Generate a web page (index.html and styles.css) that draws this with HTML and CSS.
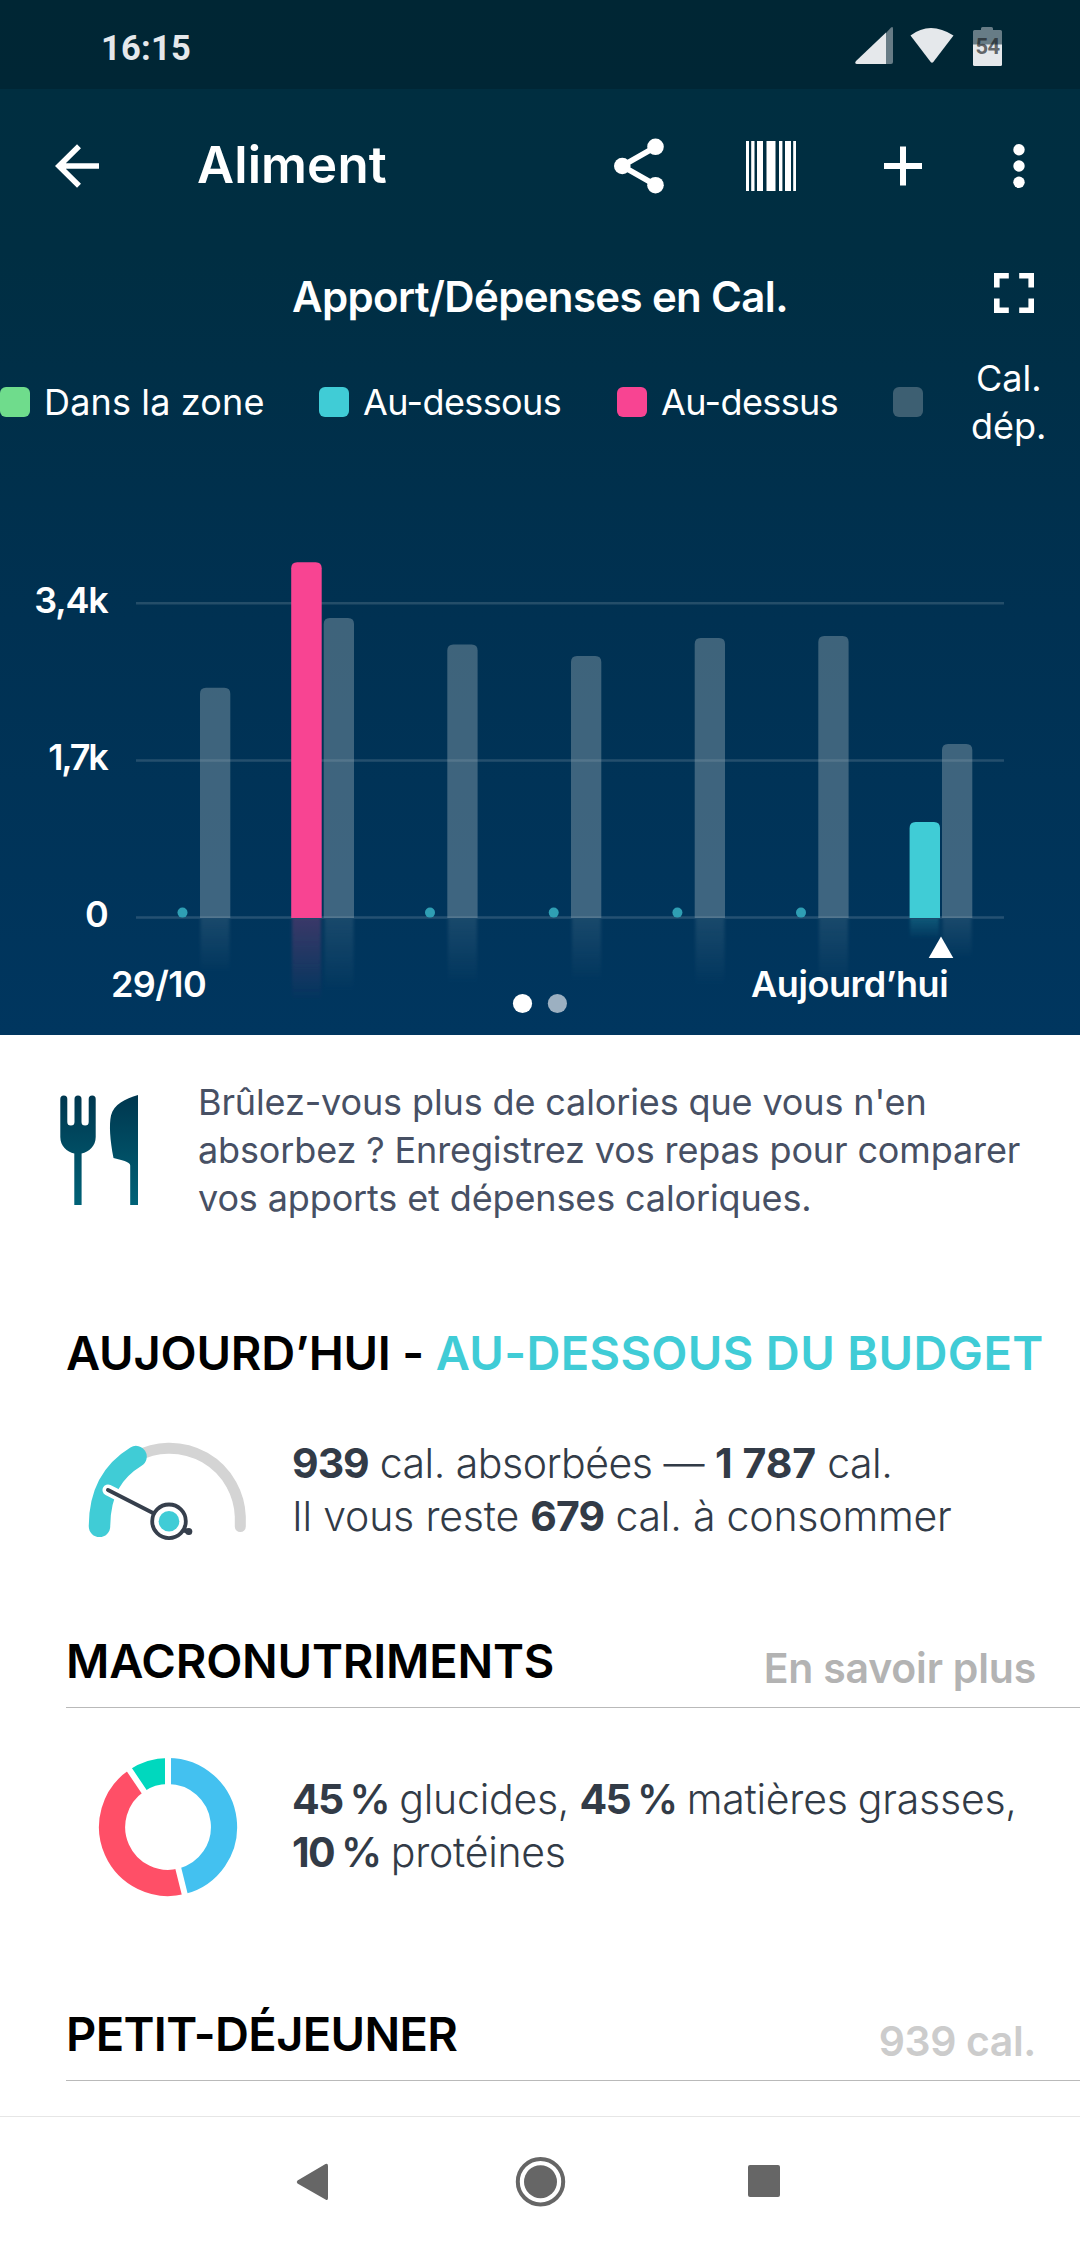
FILE: index.html
```html
<!DOCTYPE html>
<html lang="fr">
<head>
<meta charset="utf-8">
<title>Aliment</title>
<link rel="stylesheet" href="styles.css">
</head>
<body>
<section class="hero">
  <div class="statusbar">
    <span class="clock">16:15</span>
    <svg class="status-icons" width="150" height="44" viewBox="853 24 150 44">
      <path d="M891 27.500Q893 26 893 28.500V62Q893 64 891 64H886V33z" fill="#677c86"/>
      <path d="M886 32.500V64H857Q854 63.500 856 61z" fill="#e5e8eb"/>
      <path d="M910.500 35.500Q930 20.500 953.500 35.500L933.300 62Q932 63.500 930.700 62z" fill="#e5e8eb"/>
      <path d="M974.500 30H981V28.500Q981 27 982.500 27H991.500Q993 27 993 28.500V30H1000.500Q1002 30 1002 31.500V45H973V31.500Q973 30 974.500 30z" fill="#677c86"/>
      <path d="M973 44.500H1002V64.500Q1002 66 1000.500 66H974.500Q973 66 973 64.500z" fill="#e5e8eb"/>
      <text class="battery" x="987.500" y="54" text-anchor="middle">54</text>
    </svg>
  </div>
  <header class="appbar">
    <svg class="back" width="46" height="46" viewBox="54 143 46 46" fill="none" stroke="#fff" stroke-width="5.600"><path d="M99 166H59M79 146.300L59 166L79 185.700"/></svg>
    <h1>Aliment</h1>
    <svg class="actions" width="466" height="60" viewBox="614 136 466 60" fill="#fff">
      <path d="M655.500 147L622 166L655.500 185" fill="none" stroke="#fff" stroke-width="5.500"/>
      <circle cx="655.500" cy="146.800" r="8.300"/><circle cx="622.300" cy="166" r="8.300"/><circle cx="655.500" cy="185.200" r="8.300"/>
      <path d="M746 141h3v50h-3zM751.200 141h3.300v50h-3.300zM757 141h6v50h-6zM766.500 141h9v50h-9zM779 141h3.400v50h-3.400zM785 141h6v50h-6zM793.200 141h2.800v50h-2.800z"/>
      <path d="M900 146.500h6v16.500h16v6h-16v16.500h-6V169h-16v-6h16z"/>
      <circle cx="1019" cy="149.700" r="5.700"/><circle cx="1019" cy="166" r="5.700"/><circle cx="1019" cy="182.300" r="5.700"/>
    </svg>
  </header>
  <div class="chart-head">
    <h2>Apport/Dépenses en Cal.</h2>
    <svg class="expand" width="42" height="42" viewBox="0 0 42 42" fill="none" stroke="#fff" stroke-width="5.600"><path d="M3.800 15.500V3.800H15.800M26.200 3.800H38.200V15.500M38.200 26.500V38.200H26.200M15.800 38.200H3.800V26.500"/></svg>
  </div>
  <div class="legend">
    <div class="key"><i class="swatch green"></i><span class="zone">Dans la zone</span></div>
    <div class="key"><i class="swatch cyan"></i><span>Au-dessous</span></div>
    <div class="key"><i class="swatch pink"></i><span>Au-dessus</span></div>
    <div class="key burn"><i class="swatch slate"></i><span>Cal.<br>dép.</span></div>
  </div>
  <svg class="chart" width="1080" height="580" viewBox="0 455 1080 580">
    <defs>
      <linearGradient id="fadeW" x1="0" y1="0" x2="0" y2="1"><stop offset="0" stop-color="#7896a8" stop-opacity=".2"/><stop offset="1" stop-color="#7896a8" stop-opacity="0"/></linearGradient>
      <linearGradient id="fadeP" x1="0" y1="0" x2="0" y2="1"><stop offset="0" stop-color="#f84492" stop-opacity=".23"/><stop offset="1" stop-color="#f84492" stop-opacity="0"/></linearGradient>
      <linearGradient id="fadeC" x1="0" y1="0" x2="0" y2="1"><stop offset="0" stop-color="#40ccd6" stop-opacity=".22"/><stop offset="1" stop-color="#40ccd6" stop-opacity="0"/></linearGradient>
      <filter id="soft" x="-20%" width="140%"><feGaussianBlur stdDeviation="1.500 0"/></filter>
    </defs>
    <g stroke="#fff" stroke-opacity=".14" stroke-width="2.600"><path d="M136 603.300H1004M136 760.500H1004M136 917.500H1004"/></g>
    <g filter="url(#soft)">
      <g fill="url(#fadeW)">
        <rect x="200.500" y="919" width="29" height="53"/><rect x="324.500" y="919" width="29" height="72"/><rect x="448" y="919" width="29" height="64"/><rect x="572" y="919" width="29" height="62"/><rect x="695.500" y="919" width="29" height="66"/><rect x="819" y="919" width="29" height="66"/><rect x="942.500" y="919" width="29" height="39"/>
      </g>
      <rect x="292" y="919" width="29" height="82" fill="url(#fadeP)"/>
      <rect x="910" y="919" width="29" height="20" fill="url(#fadeC)"/>
    </g>
    <g fill="#9caeb9" fill-opacity=".4">
      <path d="M200 918V693.700q0-6 6-6h18.300q6 0 6 6V918z"/>
      <path d="M323.700 918V624q0-6 6-6H348q6 0 6 6V918z"/>
      <path d="M447.300 918V650.500q0-6 6-6h18.300q6 0 6 6V918z"/>
      <path d="M571 918V662q0-6 6-6h18.300q6 0 6 6V918z"/>
      <path d="M694.700 918V644q0-6 6-6H719q6 0 6 6V918z"/>
      <path d="M818.300 918V642q0-6 6-6h18.300q6 0 6 6V918z"/>
      <path d="M942 918V750q0-6 6-6h18.300q6 0 6 6V918z"/>
    </g>
    <path d="M291.200 918V568.200q0-6 6-6h18.500q6 0 6 6V918z" fill="#f84492"/>
    <path d="M909.600 918V828q0-6 6-6H934q6 0 6 6V918z" fill="#40ccd6"/>
    <g fill="#2f9fb4"><circle cx="182.500" cy="912.600" r="5"/><circle cx="430" cy="912.600" r="5"/><circle cx="553.700" cy="912.600" r="5"/><circle cx="677.400" cy="912.600" r="5"/><circle cx="801" cy="912.600" r="5"/></g>
    <g class="axis" text-anchor="end"><text x="107.500" y="613">3,4k</text><text class="narrow" x="106.500" y="770">1,7k</text><text x="107.500" y="927">0</text></g>
    <text class="axis date" x="111" y="997">29/10</text>
    <text class="axis day" x="751" y="997">Aujourd’hui</text>
    <path d="M941 936.500L953.300 958H928.700z" fill="#fff"/>
    <circle cx="522.500" cy="1003.500" r="9.600" fill="#fff"/><circle cx="557.400" cy="1003.500" r="9.600" fill="#9cb0c1"/>
  </svg>
</section>

<main>
  <section class="tip">
    <svg width="80" height="112" viewBox="59 1094 80 112">
      <defs><linearGradient id="ink" gradientUnits="userSpaceOnUse" x1="0" y1="1095" x2="0" y2="1205"><stop offset="0" stop-color="#00374f"/><stop offset="1" stop-color="#006277"/></linearGradient></defs>
      <path fill="url(#ink)" d="M60.300 1099a3.500 3.500 0 0 1 7 0V1122a3.600 3.600 0 0 0 7.200 0V1099a3.500 3.500 0 0 1 7 0V1122a3.600 3.600 0 0 0 7.200 0V1099a3.500 3.500 0 0 1 7 0V1137C95.700 1146 89 1152 81.600 1153.500V1205H74.300V1153.500C67 1152 60.300 1146 60.300 1137z"/>
      <path fill="url(#ink)" d="M138 1095V1205H130.200V1165.500C130.200 1161.500 121 1160 113.500 1158C110 1140 109 1125 111 1115.500C114 1104 125 1099 138 1095z"/>
    </svg>
    <p>Brûlez-vous plus de calories que vous n'en<br>absorbez ? Enregistrez vos repas pour comparer<br>vos apports et dépenses caloriques.</p>
  </section>

  <h2 class="title today">AUJOURD’HUI - <span>AU-DESSOUS DU BUDGET</span></h2>
  <section class="summary">
    <svg class="gauge" width="170" height="110" viewBox="84 1437 170 110" fill="none" stroke-linecap="round">
      <path d="M136 1457.600A70.800 70.800 0 0 1 240.300 1517.500V1527.500" stroke="#d4d4d4" stroke-width="11"/>
      <path d="M99.500 1527.300C99.500 1492 114 1471 136 1457.600" stroke="#40ccd6" stroke-width="21.500"/>
      <path d="M108 1491L169 1522" stroke="#fff" stroke-width="11"/>
      <circle cx="169" cy="1522.300" r="19" fill="#fff"/>
      <path d="M108 1491L153 1514" stroke="#363f4c" stroke-width="4"/>
      <path d="M184 1531L189 1532.800" stroke="#363f4c" stroke-width="5"/><circle cx="188.800" cy="1532.600" r="3.500" fill="#363f4c"/>
      <circle cx="169" cy="1522.300" r="16.800" fill="#fff" stroke="#363f4c" stroke-width="3.800"/>
      <circle cx="169" cy="1522.300" r="10.300" fill="#40ccd6"/>
    </svg>
    <p><b>939</b> cal. absorbées — <b class="tight">1 787</b> cal.<br><span class="left">Il vous reste <b>679</b> cal. à consommer</span></p>
  </section>

  <div class="sechead"><h2 class="title">MACRONUTRIMENTS</h2><a class="more">En savoir plus</a></div>
  <section class="summary macros">
    <svg class="donut" width="140" height="140" viewBox="-70 -70 140 140">
      <g fill="none" stroke-width="26.200">
        <path d="M0-56A56 56 0 0 1 13.550 54.340" stroke="#43c1f0"/>
        <path d="M13.550 54.340A56 56 0 0 1-31.300-46.400" stroke="#ff4f67"/>
        <path d="M-31.300-46.400A56 56 0 0 1 0-56" stroke="#00d8be"/>
      </g>
      <path d="M0 0V-72M0 0L17.400 69.900M0 0L-40.300-59.700" stroke="#fff" stroke-width="6"/>
    </svg>
    <p><b>45 <span>%</span></b> glucides, <b>45 <span>%</span></b> matières grasses,<br><b>10 <span>%</span></b> protéines</p>
  </section>

  <div class="sechead meal"><h2 class="title">PETIT-DÉJEUNER</h2><span class="more total">939 cal.</span></div>
</main>

<nav class="navbar">
  <svg width="1080" height="129" viewBox="0 2117 1080 129" fill="#666">
    <path d="M297.500 2180.500L325.500 2164Q328 2163 328 2166V2198Q328 2201 325.500 2199.500L297.500 2183.500Q296 2182 297.500 2180.500z"/>
    <circle cx="540.500" cy="2181.700" r="22.700" fill="none" stroke="#666" stroke-width="4"/><circle cx="540.500" cy="2181.700" r="16.500"/>
    <rect x="748" y="2165" width="32" height="32" rx="2"/>
  </svg>
</nav>
</body>
</html>
```
FILE: styles.css
```css
* { box-sizing: border-box; }
body {
  margin: 0;
  width: 1080px;
  height: 2246px;
  overflow: hidden;
  background: #fff;
  font-family: Inter, "Liberation Sans", sans-serif;
  font-size: 36px;
}
h1, h2, p { margin: 0; font-weight: 600; }
svg { display: block; flex: none; }

.hero {
  height: 1035px;
  color: #fff;
  background: linear-gradient(#002e3f 0, #002e42 250px, #003152 620px, #00365f 1035px);
}
.statusbar {
  height: 89px;
  display: flex;
  justify-content: space-between;
  padding: 0 77px 0 101px;
  background: rgba(0, 0, 0, .17);
}
.clock {
  font: 700 34.500px/96px Roboto, sans-serif;
  letter-spacing: .2px;
  color: #e5e8eb;
}
.status-icons { margin-top: 24px; }
.battery { font: 700 22px Roboto, sans-serif; fill: rgba(20, 24, 28, .65); letter-spacing: -.5px; }

.appbar { height: 154px; display: flex; align-items: center; padding-left: 54px; }
.appbar h1 { flex: 1; padding: 0 0 3px 97px; font-size: 51px; letter-spacing: .1px; }

.chart-head { height: 106px; display: grid; grid-template-columns: 1fr auto 1fr; align-items: center; }
.chart-head h2 { grid-column: 2; font-size: 42px; letter-spacing: -.65px; }
.expand { justify-self: end; margin: 0 45px 6px 0; }

.legend { height: 106px; display: grid; grid-template-columns: 319px 298px 276px 1fr; line-height: 48px; }
.key { display: flex; align-items: center; gap: 14px; letter-spacing: -.6px; }
.zone { letter-spacing: .15px; }
.burn { gap: 48px; text-align: center; letter-spacing: 0; }
.swatch { width: 30px; height: 30px; border-radius: 6px; }
.green { background: #6fdc8c; }
.cyan { background: #40ccd6; }
.pink { background: #f84492; }
.slate { background: #3d5f72; }

.axis { font-size: 36px; font-weight: 600; fill: #fff; letter-spacing: -1.200px; }
.narrow { letter-spacing: -2.200px; }
.date { letter-spacing: -.6px; }
.day { letter-spacing: -.4px; }

.tip { display: flex; padding: 43px 0 0 59px; height: 187px; }
.tip svg { margin: 16px 59px 0 0; }
.tip p { font-weight: 400; line-height: 48px; letter-spacing: -.13px; color: #475064; white-space: nowrap; }

.title { font-size: 47px; line-height: 56px; letter-spacing: -.2px; color: #000; white-space: nowrap; }
.today { margin: 103px 0 55px 66px; }
.today span { color: #40ccd6; letter-spacing: .35px; }

.summary { display: flex; padding-left: 84px; height: 107px; color: #323b47; }
.summary p { padding-top: 1px; font-size: 41px; line-height: 53px; font-weight: 300; letter-spacing: -.5px; white-space: nowrap; }
.summary b { font-weight: 700; letter-spacing: -1px; }
.summary b span { font-weight: 600; }
.summary .tight { letter-spacing: 0; }
.left { letter-spacing: -.2px; }
.gauge { margin-right: 38px; }

.sechead {
  display: flex;
  justify-content: space-between;
  height: 75px;
  margin: 90px 0 0 66px;
  padding-right: 44px;
  border-bottom: 1px solid #b9b9b9;
}
.more { margin-top: 9.500px; font-size: 41px; line-height: 50px; font-weight: 600; letter-spacing: -.2px; color: #b3b3b3; }
.total { color: #ccc; letter-spacing: -.4px; }
.macros { margin-top: 64px; padding-left: 98px; }
.summary.macros p { letter-spacing: -.25px; word-spacing: -1px; }
.summary.macros b { letter-spacing: -1.700px; }
.donut { margin: -15px 54px 0 0; }
.meal { margin-top: 127px; }
.meal .title { letter-spacing: -.65px; }

.navbar { margin-top: 35px; height: 130px; border-top: 1px solid #e6e6e6; }
```
